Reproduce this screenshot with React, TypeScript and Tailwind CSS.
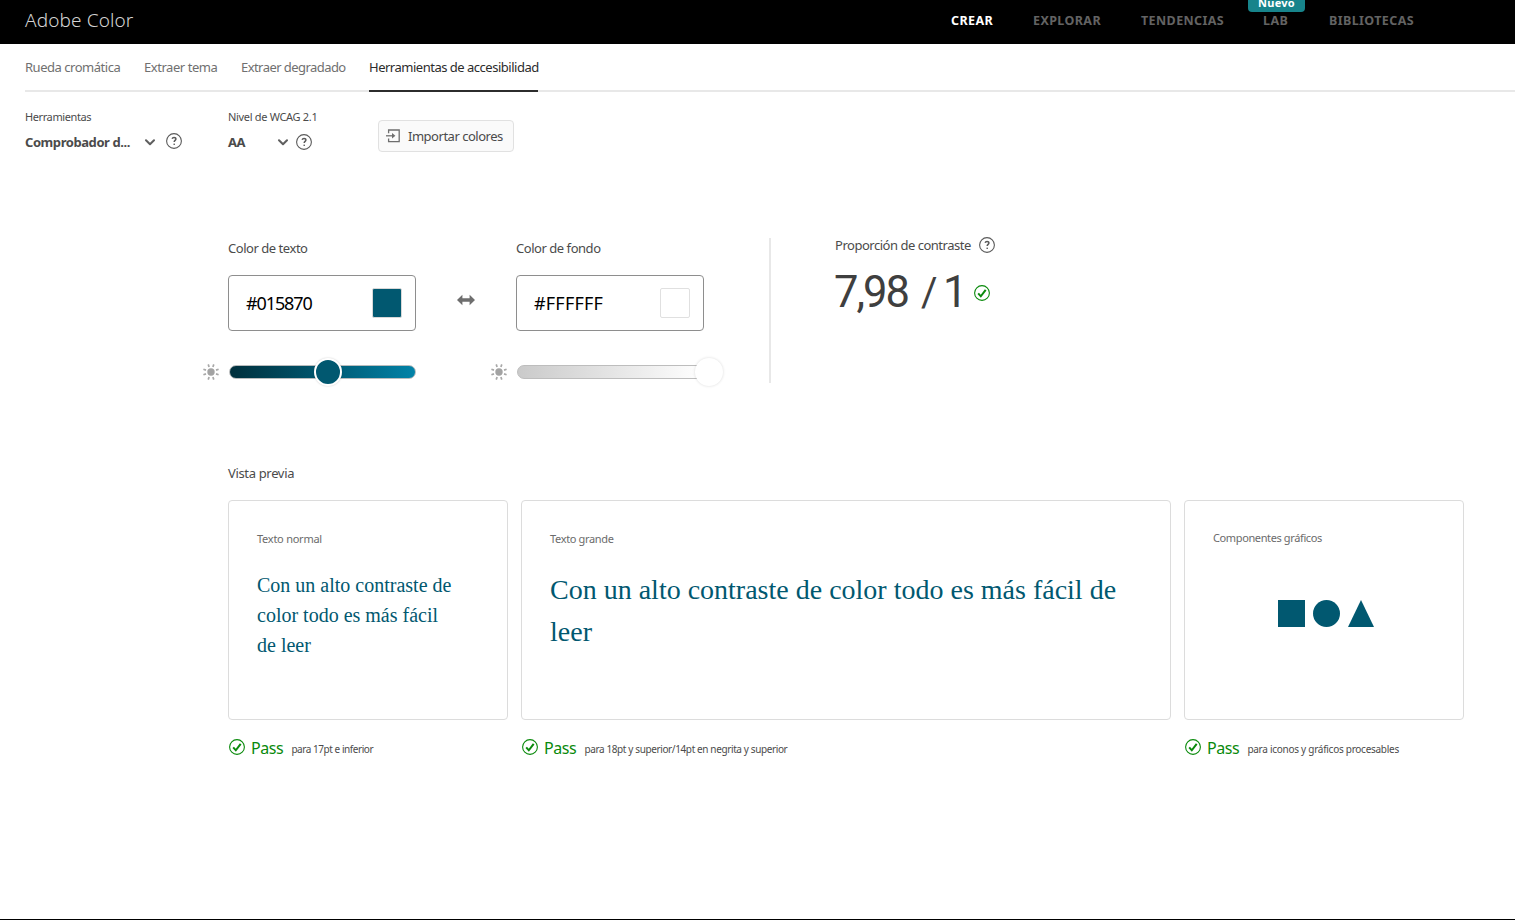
import type { ReactNode } from "react";

function HelpIcon() {
  return (
    <svg className="size-4 shrink-0" viewBox="0 0 16 16" fill="none" stroke="#5a5a5a">
      <circle cx="8" cy="8" r="7.4" strokeWidth="1.1" />
      <path d="M6.1 5.8C6.4 4.9 7.1 4.5 8 4.5c1.1 0 1.9.6 1.9 1.6 0 1.3-1.7 1.4-1.7 2.9" strokeWidth="1.5" />
      <rect x="7.5" y="10.6" width="1.4" height="1.4" fill="#5a5a5a" stroke="none" />
    </svg>
  );
}

function Chevron() {
  return (
    <svg className="h-[7px] w-[11px] shrink-0" viewBox="0 0 11 7" fill="none" stroke="#5f5f5f" strokeWidth="2" strokeLinecap="round" strokeLinejoin="round">
      <path d="M2 1.3l4 4 4-4" />
    </svg>
  );
}

function CheckIcon() {
  return (
    <svg className="size-4 shrink-0" viewBox="0 0 16 16" fill="none" stroke="#098a0b">
      <circle cx="8" cy="8" r="7.4" strokeWidth="1.1" />
      <path d="M4.2 8.4l2.6 2.9 4.9-6.5" strokeWidth="2" />
    </svg>
  );
}

function SunIcon() {
  return (
    <svg className="size-4 shrink-0" viewBox="0 0 16 16" stroke="#a8a8a8" strokeWidth="1.7">
      <circle cx="8" cy="8" r="3.7" fill="#a3a3a3" stroke="none" />
      <path d="M6.1 3L5.2.4M9.9 3l.9-2.6M6.1 13l-.9 2.6M9.9 13l.9 2.6M3 6.1L.4 5.2M13 6.1l2.6-.9M3 9.9l-2.6.9M13 9.9l2.6.9" />
    </svg>
  );
}

function ImportIcon() {
  return (
    <svg className="h-[14px] w-[14px] shrink-0" viewBox="0 0 14 14" fill="none" stroke="#6e6e6e" strokeWidth="1.3">
      <path d="M2.6 4.2V1h10.6v11.6H2.6V9.4" />
      <path d="M0 6.8h7" />
      <path d="M6 4l3.4 2.8L6 9.6z" fill="#6e6e6e" stroke="none" />
    </svg>
  );
}

function ColorField({ label, value, children }: { label: string; value: string; children: ReactNode }) {
  return (
    <div className="w-[188px]">
      <div className="h-[37px] text-[13px] leading-5 tracking-[-0.46px] whitespace-nowrap text-[#4b4b4b]">{label}</div>
      <div className="flex h-14 items-center justify-between rounded border border-[#8e8e8e] pr-[13px] pl-[17px] text-[18px] text-black">
        {value === "#FFFFFF" ? (
          <span className="tracking-[0.2px]">{value}</span>
        ) : (
          <span className="tracking-[-1.1px]">{value}</span>
        )}
        {children}
      </div>
    </div>
  );
}

function PassNote({ children }: { children: ReactNode }) {
  return (
    <div className="flex h-4 items-center pl-px">
      <CheckIcon />
      <span className="ml-[6px] pt-px text-[16px] leading-4 tracking-[-0.4px] text-[#098a0b]">Pass</span>
      <span className="ml-2 pt-[3px] text-[10px] leading-4 whitespace-nowrap text-[#4b4b4b]">{children}</span>
    </div>
  );
}

export default function App() {
  return (
    <div className="flex h-[920px] w-[1515px] flex-col overflow-hidden border-b border-black bg-white font-['Noto_Sans',sans-serif] text-[#4b4b4b]">
      <header className="flex h-11 shrink-0 justify-between bg-black pl-[25px]">
        <div className="mt-1.5 text-[19px] leading-7 font-[350] tracking-[0.12px] whitespace-nowrap text-[#d4d4d4]">Adobe Color</div>
        <nav className="mr-[99px] flex text-[12.5px] leading-5 font-bold tracking-[0.4px] text-[#636363]">
          <span className="mt-[11px] w-[82px] text-white">CREAR</span>
          <span className="mt-[11px] w-[108px]">EXPLORAR</span>
          <span className="mt-[11px] w-[122px]">TENDENCIAS</span>
          <span className="relative mt-[11px] w-[66px]">
            LAB
            <span className="absolute -top-[18px] -left-[15px] h-[19px] w-[57px] rounded bg-[#17848b] text-center text-[11px] leading-5 tracking-[0.3px] text-white">Nuevo</span>
          </span>
          <span className="mt-[11px] w-[87px]">BIBLIOTECAS</span>
        </nav>
      </header>

      <div className="ml-[25px] flex h-12 shrink-0 gap-6 border-b-2 border-[#e8e8e8] pt-[13px] text-[13px] leading-5 whitespace-nowrap text-[#707070]">
        <span className="w-[95px] tracking-[-0.47px]">Rueda cromática</span>
        <span className="w-[73px] tracking-[-0.45px]">Extraer tema</span>
        <span className="w-[104px] tracking-[-0.56px]">Extraer degradado</span>
        <span className="h-[35px] w-[169px] border-b-2 border-[#2c2c2c] tracking-[-0.49px] text-[#2c2c2c]">Herramientas de accesibilidad</span>
      </div>

      <div className="flex h-[146px] shrink-0 pt-[17px] pl-[25px]">
        <div className="w-[203px]">
          <div className="text-[11px] leading-4 tracking-[-0.4px]">Herramientas</div>
          <div className="mt-[7px] flex h-5 items-center text-[13px] font-bold whitespace-nowrap">
            <span className="w-[119px] pt-px tracking-[-0.43px]">Comprobador d...</span>
            <Chevron />
            <span className="-mt-0.5 ml-[11px] flex"><HelpIcon /></span>
          </div>
        </div>
        <div className="w-[150px]">
          <div className="text-[11px] leading-4 tracking-[-0.32px]">Nivel de WCAG 2.1</div>
          <div className="mt-[7px] flex h-5 items-center text-[13px] font-bold">
            <span className="w-[49px] pt-px tracking-[-0.5px]">AA</span>
            <Chevron />
            <span className="ml-2 flex"><HelpIcon /></span>
          </div>
        </div>
        <button className="mt-[11px] flex h-8 w-[136px] items-center rounded border border-[#e1e1e1] bg-[#fafafa] pl-[7px] text-[13px] tracking-[-0.48px] whitespace-nowrap">
          <ImportIcon />
          <span className="ml-2 pt-0.5">Importar colores</span>
        </button>
      </div>

      <section className="flex h-[226px] shrink-0 pl-[203px]">
        <div className="w-[566px]">
          <div className="flex pl-[25px]">
            <ColorField label="Color de texto" value="#015870">
              <span className="size-[30px] rounded-[2px] border border-[#d8d8d8] bg-[#015870]" />
            </ColorField>
            <svg className="mx-[41px] mt-[56px] h-3 w-[18px]" viewBox="0 0 18 12" fill="#6e6e6e">
              <path d="M0 6l5.4-5.2v3.4h7.2V.8L18 6l-5.4 5.2V7.8H5.4v3.4z" />
            </svg>
            <ColorField label="Color de fondo" value="#FFFFFF">
              <span className="size-[30px] rounded-[2px] border border-[#e0e0e0] bg-white" />
            </ColorField>
          </div>
          <div className="mt-[27px] flex h-[28px] items-center">
            <SunIcon />
            <div className="relative ml-[10px] h-[14px] w-[187px] rounded-full border border-[#b9bcbd] bg-linear-to-r from-[#00303d] to-[#0283a8]">
              <span className="absolute -top-2 left-[84px] size-7 rounded-full border-[2.5px] border-white bg-[#015870] shadow-[0_0_2px_rgba(0,0,0,0.2)]" />
            </div>
            <span className="ml-[75px] flex"><SunIcon /></span>
            <div className="relative ml-[10px] h-[14px] w-[187px] rounded-full border border-[#bdbdbd] bg-linear-to-r from-[#cacaca] to-white">
              <span className="absolute -top-2 left-[177px] size-7 rounded-full bg-white shadow-[0_0_3px_rgba(0,0,0,0.15)]" />
            </div>
          </div>
        </div>
        <div className="h-[145px] w-[2px] bg-[#e8e8e8]" />
        <div className="ml-[64px]">
          <div className="-mt-[2px] flex h-[18px] items-center gap-2 text-[13px] leading-[18px] tracking-[-0.48px] whitespace-nowrap">
            <span className="w-[136px]">Proporción de contraste</span>
            <HelpIcon />
          </div>
          <div className="mt-[14px] flex h-[50px] items-center font-['Roboto',sans-serif] text-[43.5px] leading-[50px] text-[#3f3f3f]">
            <span className="-ml-px w-[87px] tracking-[-2px]">7,98</span>
            <span className="w-[22px] text-[40px]">/</span>
            <span className="w-[31px]">1</span>
            <CheckIcon />
          </div>
        </div>
      </section>

      <section className="pl-[228px]">
        <h2 className="h-9 text-[13px] leading-[19px] tracking-[-0.34px]">Vista previa</h2>
        <div className="flex gap-[13px]">
          <div className="w-[280px]">
            <div className="mb-[19px] h-[220px] rounded border border-[#dcdcdc] px-7 pt-[30px]">
              <div className="text-[11px] leading-4 tracking-[-0.25px] text-[#6b6b6b]">Texto normal</div>
              <p className="mt-[23px] w-[200px] font-['Liberation_Serif',serif] text-[20px] leading-[30px] text-[#015870]">Con un alto contraste de color todo es más fácil de leer</p>
            </div>
            <PassNote><span className="tracking-[-0.45px]">para 17pt e inferior</span></PassNote>
          </div>
          <div className="w-[650px]">
            <div className="mb-[19px] h-[220px] rounded border border-[#dcdcdc] px-7 pt-[30px]">
              <div className="text-[11px] leading-4 tracking-[-0.34px] text-[#6b6b6b]">Texto grande</div>
              <p className="mt-[22px] font-['Liberation_Serif',serif] text-[28px] leading-[42px] text-[#015870]">Con un alto contraste de color todo es más fácil de leer</p>
            </div>
            <PassNote><span className="tracking-[-0.38px]">para 18pt y superior/14pt en negrita y superior</span></PassNote>
          </div>
          <div className="w-[280px]">
            <div className="mb-[19px] h-[220px] rounded border border-[#dcdcdc] px-7 pt-[29px]">
              <div className="text-[11px] leading-4 tracking-[-0.38px] text-[#6b6b6b]">Componentes gráficos</div>
              <svg className="mt-[54px] ml-[65px] h-[27px] w-[97px]" viewBox="0 0 97 27" fill="#015870">
                <rect width="27" height="27" />
                <circle cx="48.5" cy="13.5" r="13.5" />
                <path d="M83 0l13 27H70z" />
              </svg>
            </div>
            <PassNote><span className="tracking-[-0.27px]">para iconos y gráficos procesables</span></PassNote>
          </div>
        </div>
      </section>
    </div>
  );
}
